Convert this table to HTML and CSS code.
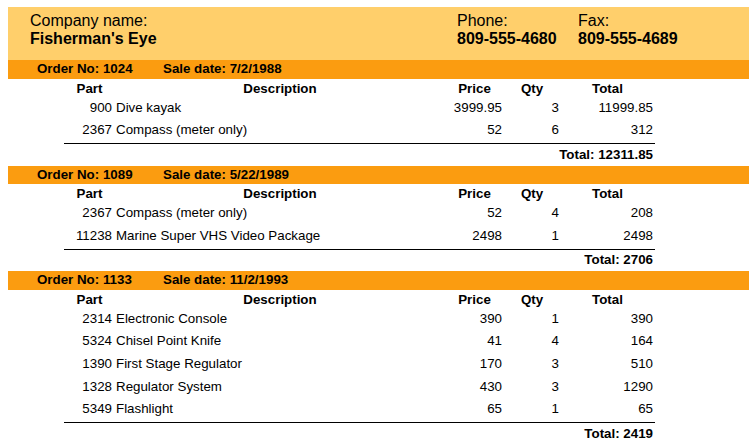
FILE: index.html
```html
<!DOCTYPE html>
<html>
<head>
<meta charset="utf-8">
<link rel="stylesheet" href="styles.css">
</head>
<body>
<div class="report">
  <div class="company">
    <div class="field f-name"><div class="label">Company name:</div><div class="value">Fisherman's Eye</div></div>
    <div class="field f-phone"><div class="label">Phone:</div><div class="value">809-555-4680</div></div>
    <div class="field f-fax"><div class="label">Fax:</div><div class="value">809-555-4689</div></div>
  </div>

  <section class="order">
    <div class="band"><span class="ono">Order No: 1024</span><span>Sale date: 7/2/1988</span></div>
    <div class="items">
      <div class="h">Part</div><div class="h">Description</div><div class="h">Price</div><div class="h">Qty</div><div class="h">Total</div>
      <div class="c part">900</div><div class="c desc">Dive kayak</div><div class="c num price">3999.95</div><div class="c num qty">3</div><div class="c num tot">11999.85</div>
      <div class="c part">2367</div><div class="c desc">Compass (meter only)</div><div class="c num price">52</div><div class="c num qty">6</div><div class="c num tot">312</div>
    </div>
    <div class="sum">Total: 12311.85</div>
  </section>

  <section class="order">
    <div class="band"><span class="ono">Order No: 1089</span><span>Sale date: 5/22/1989</span></div>
    <div class="items">
      <div class="h">Part</div><div class="h">Description</div><div class="h">Price</div><div class="h">Qty</div><div class="h">Total</div>
      <div class="c part">2367</div><div class="c desc">Compass (meter only)</div><div class="c num price">52</div><div class="c num qty">4</div><div class="c num tot">208</div>
      <div class="c part">11238</div><div class="c desc">Marine Super VHS Video Package</div><div class="c num price">2498</div><div class="c num qty">1</div><div class="c num tot">2498</div>
    </div>
    <div class="sum">Total: 2706</div>
  </section>

  <section class="order">
    <div class="band"><span class="ono">Order No: 1133</span><span>Sale date: 11/2/1993</span></div>
    <div class="items">
      <div class="h">Part</div><div class="h">Description</div><div class="h">Price</div><div class="h">Qty</div><div class="h">Total</div>
      <div class="c part">2314</div><div class="c desc">Electronic Console</div><div class="c num price">390</div><div class="c num qty">1</div><div class="c num tot">390</div>
      <div class="c part">5324</div><div class="c desc">Chisel Point Knife</div><div class="c num price">41</div><div class="c num qty">4</div><div class="c num tot">164</div>
      <div class="c part">1390</div><div class="c desc">First Stage Regulator</div><div class="c num price">170</div><div class="c num qty">3</div><div class="c num tot">510</div>
      <div class="c part">1328</div><div class="c desc">Regulator System</div><div class="c num price">430</div><div class="c num qty">3</div><div class="c num tot">1290</div>
      <div class="c part">5349</div><div class="c desc">Flashlight</div><div class="c num price">65</div><div class="c num qty">1</div><div class="c num tot">65</div>
    </div>
    <div class="sum">Total: 2419</div>
  </section>
</div>
</body>
</html>
```

FILE: styles.css
```css
html, body {
  margin: 0;
  padding: 0;
  overflow: hidden;
  background: #ffffff;
}
body {
  padding: 7px 0 0 8px;
  font-family: "Liberation Sans", Arial, sans-serif;
  color: #000;
}
.report {
  width: 741px;
}
.company {
  background: #ffcf6b;
  height: 53px;
  box-sizing: border-box;
  padding: 5px 0 0 22px;
  display: flex;
  font-size: 16px;
  line-height: 18px;
}
.company .value {
  font-weight: bold;
}
.f-name { width: 427px; }
.f-phone { width: 121px; }
.order {
  padding-bottom: 2.6px;
}
.band {
  background: #fb9c10;
  height: 18.75px;
  line-height: 18.75px;
  font-size: 13.33px;
  font-weight: bold;
  padding-left: 29px;
  display: flex;
}
.ono {
  width: 126px;
}
.items {
  margin-left: 56px;
  width: 591px;
  display: grid;
  grid-template-columns: 51px 330px 59px 56px 95px;
  font-size: 13.33px;
  border-bottom: 1px solid #000;
  padding-bottom: 1px;
}
.h {
  font-weight: bold;
  text-align: center;
  padding-top: 2px;
  padding-bottom: 1px;
  line-height: 15px;
}
.c {
  line-height: 22.67px;
  white-space: nowrap;
}
.part {
  text-align: right;
  padding-right: 3px;
}
.desc {
  padding-left: 1px;
}
.num {
  text-align: right;
}
.price { padding-right: 2px; }
.qty { padding-right: 1px; }
.tot { padding-right: 2px; }
.sum {
  margin-left: 56px;
  width: 589px;
  text-align: right;
  font-size: 13.33px;
  font-weight: bold;
  line-height: 16px;
  padding-top: 2.83px;
}
```
